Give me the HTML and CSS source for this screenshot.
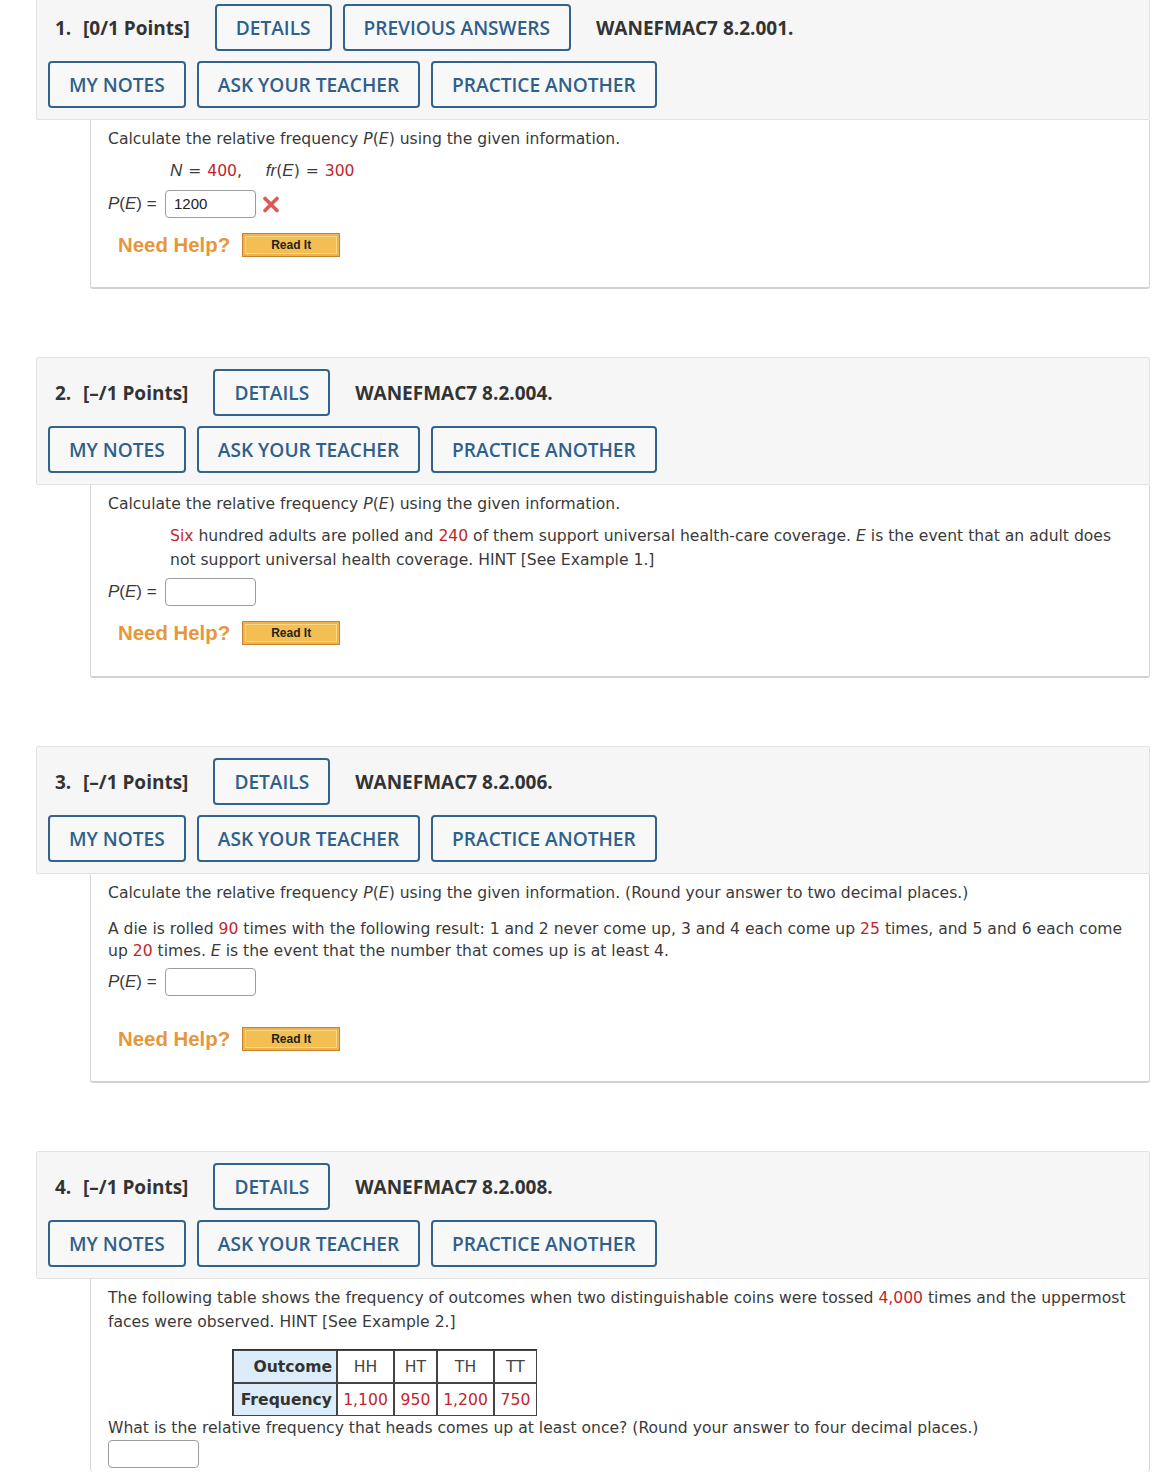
FILE: index.html
```html
<!DOCTYPE html>
<html>
<head>
<meta charset="utf-8">
<link rel="stylesheet" href="styles.css">
</head>
<body>
<div class="page">

  <div class="question first">
    <div class="qhead">
      <div class="row">
        <span class="qnum">1.</span><span class="points">[0/1 Points]</span>
        <span class="btn">DETAILS</span>
        <span class="btn">PREVIOUS ANSWERS</span>
        <span class="code">WANEFMAC7 8.2.001.</span>
      </div>
      <div class="row">
        <span class="btn">MY NOTES</span>
        <span class="btn">ASK YOUR TEACHER</span>
        <span class="btn">PRACTICE ANOTHER</span>
      </div>
    </div>
    <div class="qbody tight">
      <p class="line">Calculate the relative frequency <i>P</i>(<i>E</i>) using the given information.</p>
      <p class="given"><i class="ar">N</i> = <span class="red">400</span>, &nbsp;&nbsp; <i class="ar">fr</i>(<i class="ar">E</i>) = <span class="red">300</span></p>
      <div class="answer">
        <span class="pe"><i>P</i>(<i>E</i>) =</span>
        <span class="input">1200</span>
        <svg class="xmark" width="18" height="17" viewBox="0 0 18 17"><path d="M3 2.5 L15 14.5 M15 2.5 L3 14.5" stroke="#e05656" stroke-width="3.6" stroke-linecap="round"/></svg>
      </div>
      <div class="help"><span class="needhelp">Need Help?</span><span class="readit">Read It</span></div>
    </div>
  </div>

  <div class="question">
    <div class="qhead">
      <div class="row">
        <span class="qnum">2.</span><span class="points">[–/1 Points]</span>
        <span class="btn">DETAILS</span>
        <span class="code">WANEFMAC7 8.2.004.</span>
      </div>
      <div class="row">
        <span class="btn">MY NOTES</span>
        <span class="btn">ASK YOUR TEACHER</span>
        <span class="btn">PRACTICE ANOTHER</span>
      </div>
    </div>
    <div class="qbody">
      <p class="line">Calculate the relative frequency <i>P</i>(<i>E</i>) using the given information.</p>
      <p class="indent"><span class="red">Six</span> hundred adults are polled and <span class="red">240</span> of them support universal health-care coverage. <i>E</i> is the event that an adult does<br>not support universal health coverage. HINT [See Example 1.]</p>
      <div class="answer a2">
        <span class="pe"><i>P</i>(<i>E</i>) =</span>
        <span class="input"></span>
      </div>
      <div class="help"><span class="needhelp">Need Help?</span><span class="readit">Read It</span></div>
    </div>
  </div>

  <div class="question">
    <div class="qhead">
      <div class="row">
        <span class="qnum">3.</span><span class="points">[–/1 Points]</span>
        <span class="btn">DETAILS</span>
        <span class="code">WANEFMAC7 8.2.006.</span>
      </div>
      <div class="row">
        <span class="btn">MY NOTES</span>
        <span class="btn">ASK YOUR TEACHER</span>
        <span class="btn">PRACTICE ANOTHER</span>
      </div>
    </div>
    <div class="qbody tight">
      <p class="line">Calculate the relative frequency <i>P</i>(<i>E</i>) using the given information. (Round your answer to two decimal places.)</p>
      <p class="die">A die is rolled <span class="red">90</span> times with the following result: 1 and 2 never come up, 3 and 4 each come up <span class="red">25</span> times, and 5 and 6 each come<br>up <span class="red">20</span> times. <i>E</i> is the event that the number that comes up is at least 4.</p>
      <div class="answer a3">
        <span class="pe"><i>P</i>(<i>E</i>) =</span>
        <span class="input"></span>
      </div>
      <div class="help h3"><span class="needhelp">Need Help?</span><span class="readit">Read It</span></div>
    </div>
  </div>

  <div class="question">
    <div class="qhead">
      <div class="row">
        <span class="qnum">4.</span><span class="points">[–/1 Points]</span>
        <span class="btn">DETAILS</span>
        <span class="code">WANEFMAC7 8.2.008.</span>
      </div>
      <div class="row">
        <span class="btn">MY NOTES</span>
        <span class="btn">ASK YOUR TEACHER</span>
        <span class="btn">PRACTICE ANOTHER</span>
      </div>
    </div>
    <div class="qbody last">
      <p class="line">The following table shows the frequency of outcomes when two distinguishable coins were tossed <span class="red">4,000</span> times and the uppermost<br>faces were observed. HINT [See Example 2.]</p>
      <table class="freq">
        <tr><th>Outcome</th><td class="c1">HH</td><td class="c2">HT</td><td class="c3">TH</td><td class="c4">TT</td></tr>
        <tr><th>Frequency</th><td class="red">1,100</td><td class="red">950</td><td class="red">1,200</td><td class="red">750</td></tr>
      </table>
      <p class="line">What is the relative frequency that heads comes up at least once? (Round your answer to four decimal places.)</p>
      <span class="input blank"></span>
    </div>
  </div>

</div>
</body>
</html>
```

FILE: styles.css
```css
* { box-sizing: border-box; }
body {
  margin: 0;
  background: #ffffff;
  font-family: "DejaVu Sans", Verdana, sans-serif;
  color: #333333;
}
.page {
  width: 1114px;
  margin-left: 36px;
}
.question {
  margin-top: 68px;
}
.question.first {
  margin-top: -8px;
}
.qhead {
  background: #f6f6f6;
  border: 1px solid #e2e2e2;
  border-radius: 2px;
  padding: 11px;
  display: flex;
  flex-direction: column;
  gap: 10px;
}
.row {
  display: flex;
  align-items: center;
  gap: 11px;
  font-family: "Open Sans", sans-serif;
}
.qnum {
  font-weight: 700;
  font-size: 19px;
  color: #333;
  margin-left: 7px;
  width: 17px;
}
.points {
  font-weight: 700;
  font-size: 19px;
  color: #333;
  margin-right: 14px;
}
.code {
  font-weight: 700;
  font-size: 19px;
  color: #333;
  margin-left: 14px;
}
.btn {
  display: inline-flex;
  align-items: center;
  justify-content: center;
  height: 47px;
  padding: 0 19px;
  border: 2px solid #32638f;
  border-radius: 4px;
  background: #f8f8f8;
  color: #2f5f8b;
  font-family: "Open Sans", sans-serif;
  font-weight: 600;
  font-size: 19.1px;
}
.qbody {
  margin-left: 54px;
  border: 1px solid #d6d6d6;
  border-top: none;
  border-bottom: 2px solid #d2d2d2;
  border-radius: 0 0 3px 3px;
  padding: 7px 8px 31px 17px;
  font-size: 15.6px;
  color: #3a3a3a;
}
.qbody.tight {
  padding-bottom: 30px;
}
.qbody.last {
  border-bottom: none;
  padding-bottom: 4px;
}
p { margin: 0; }
.line {
  line-height: 24px;
}
.red { color: #c0262c; }
.given {
  line-height: 24px;
  margin: 8px 0 0 62px;
  word-spacing: 1px;
}
.ar {
  font-family: "Liberation Sans", Arial, sans-serif;
  font-size: 17px;
}
.indent {
  line-height: 24px;
  margin: 8px 0 0 62px;
}
.die {
  line-height: 22px;
  margin-top: 13px;
}
.answer {
  display: flex;
  align-items: center;
  margin-top: 7px;
  height: 28px;
}
.a2 { margin-top: 6px; }
.a3 { margin-top: 6px; }
.pe {
  font-family: "Liberation Sans", Arial, sans-serif;
  font-size: 17px;
  width: 57px;
}
.input {
  display: inline-block;
  width: 91px;
  height: 28px;
  border: 1px solid #9c9c9c;
  border-radius: 4px;
  background: #fff;
  font-family: "Liberation Sans", Arial, sans-serif;
  font-size: 15px;
  line-height: 26px;
  padding-left: 8px;
  color: #222;
}
.input.blank {
  display: block;
}
.xmark {
  margin-left: 6px;
}
.help {
  display: flex;
  align-items: center;
  margin: 15px 0 0 10px;
  height: 24px;
}
.h3 { margin-top: 31px; }
.needhelp {
  font-family: "Liberation Sans", Arial, sans-serif;
  font-weight: 700;
  font-size: 20.4px;
  color: #e8963d;
  margin-right: 12px;
}
.readit {
  display: inline-flex;
  align-items: center;
  justify-content: center;
  width: 98px;
  height: 24px;
  border: 1px solid #c8832f;
  box-shadow: inset 0 0 0 2px #f0b24a, inset 0 0 0 3px #f8d98c;
  background: #f3bf52;
  font-family: "Liberation Sans", Arial, sans-serif;
  font-weight: 700;
  font-size: 12px;
  color: #222;
}
.freq {
  border-collapse: separate;
  border-spacing: 0;
  margin: 15px 0 0 124px;
  border-left: 1px solid #333;
  border-top: 1px solid #333;
  font-size: 15.6px;
}
.freq th, .freq td {
  border: 1px solid #444;
  height: 33px;
  padding: 0 4px;
}
.freq th {
  background: #dcecf9;
  text-align: right;
  font-weight: 700;
  color: #333;
  width: 104px;
}
.freq td {
  text-align: center;
  color: #444;
}
.freq td.red { color: #c0262c; }
.c1 { width: 57px; }
.c2 { width: 43px; }
.c3 { width: 57px; }
.c4 { width: 43px; }
```
